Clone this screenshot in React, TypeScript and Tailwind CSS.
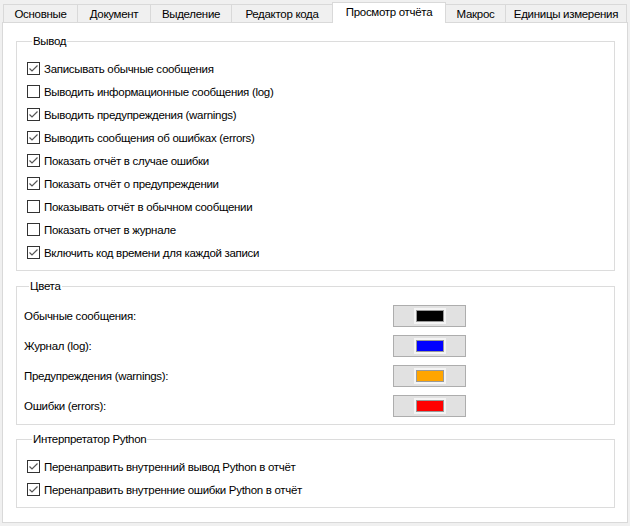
import React from "react";

const font = { fontFamily: '"Liberation Sans", Arial, sans-serif' };
const txt = "text-[11.5px] tracking-[-0.3px] leading-[16px] text-black whitespace-nowrap";

function Check({ checked, label }: { checked: boolean; label: string }) {
  return (
    <div className="flex items-center h-[23px] gap-[4px]">
      <div className="w-[13px] h-[13px] border border-[#333333] bg-white flex items-center justify-center shrink-0">
        {checked && (
          <svg width="11" height="11" viewBox="0 0 11 11">
            <polyline points="1.5,5.5 4,8 9.5,2.5" fill="none" stroke="#555555" strokeWidth="1.2" />
          </svg>
        )}
      </div>
      <span className={txt}>{label}</span>
    </div>
  );
}

function Swatch({ label, color }: { label: string; color: string }) {
  return (
    <div className="flex items-center h-[30px]">
      <span className={"w-[369px] " + txt}>{label}</span>
      <div className="w-[73px] h-[22px] border border-[#adadad] bg-[#e1e1e1] flex items-center justify-center">
        <div className="w-[32px] h-[16px] bg-[#f4f4f4] p-[2px]">
          <div className="w-full h-full border border-[#999999]" style={{ backgroundColor: color }} />
        </div>
      </div>
    </div>
  );
}

function Group({ title, className, children }: { title: string; className?: string; children: React.ReactNode }) {
  return (
    <fieldset className={"border border-[#dcdcdc] " + (className ?? "")}>
      <legend className={"ml-[5px] px-[1px] " + txt}>{title}</legend>
      {children}
    </fieldset>
  );
}

export default function App() {
  const tabs = [
    { t: "Основные", w: "w-[74px]" },
    { t: "Документ", w: "w-[73px]" },
    { t: "Выделение", w: "w-[81px]" },
    { t: "Редактор кода", w: "w-[101px]" },
  ];
  return (
    <div className="w-[630px] h-[526px] bg-[#f0f0f0] pt-[2px] pl-[2px] overflow-hidden" style={font}>
      <div className="flex items-end h-[20px] ml-[1px] relative z-10">
        {tabs.map((x) => (
          <div
            key={x.t}
            className={x.w + " h-[18px] border-t border-l border-[#d9d9d9] bg-[#f0f0f0] flex items-center justify-center " + txt}
          >
            {x.t}
          </div>
        ))}
        <div className={"w-[114px] h-[21px] -mb-[1px] border-t border-l border-r border-[#d9d9d9] bg-white flex items-center justify-center pb-[2px] " + txt}>
          Просмотр отчёта
        </div>
        <div className={"w-[59px] h-[18px] border-t border-[#d9d9d9] bg-[#f0f0f0] flex items-center justify-center " + txt}>
          Макрос
        </div>
        <div className={"w-[122px] h-[18px] border-t border-l border-r border-[#d9d9d9] bg-[#f0f0f0] flex items-center justify-center " + txt}>
          Единицы измерения
        </div>
      </div>
      <div className="w-[626px] h-[501px] border border-[#d9d9d9] bg-white pl-[13px] pr-[12px] flex flex-col">
        <Group title="Вывод" className="mt-[10px] pl-[10px] pt-[8px] pb-[6px]">
          <Check checked label="Записывать обычные сообщения" />
          <Check checked={false} label="Выводить информационные сообщения (log)" />
          <Check checked label="Выводить предупреждения (warnings)" />
          <Check checked label="Выводить сообщения об ошибках (errors)" />
          <Check checked label="Показать отчёт в случае ошибки" />
          <Check checked label="Показать отчёт о предупреждении" />
          <Check checked={false} label="Показывать отчёт в обычном сообщении" />
          <Check checked={false} label="Показать отчет в журнале" />
          <Check checked label="Включить код времени для каждой записи" />
        </Group>
        <Group title="Цвета" className="mt-[7px] pl-[7px] pt-[7px] pb-[3px]">
          <Swatch label="Обычные сообщения:" color="#000000" />
          <Swatch label="Журнал (log):" color="#0000ff" />
          <Swatch label="Предупреждения (warnings):" color="#ffa500" />
          <Swatch label="Ошибки (errors):" color="#ff0000" />
        </Group>
        <Group title="Интерпретатор Python" className="mt-[6px] pl-[10px] pt-[8px] pb-[6px]">
          <Check checked label="Перенаправить внутренний вывод Python в отчёт" />
          <Check checked label="Перенаправить внутренние ошибки Python в отчёт" />
        </Group>
      </div>
    </div>
  );
}
